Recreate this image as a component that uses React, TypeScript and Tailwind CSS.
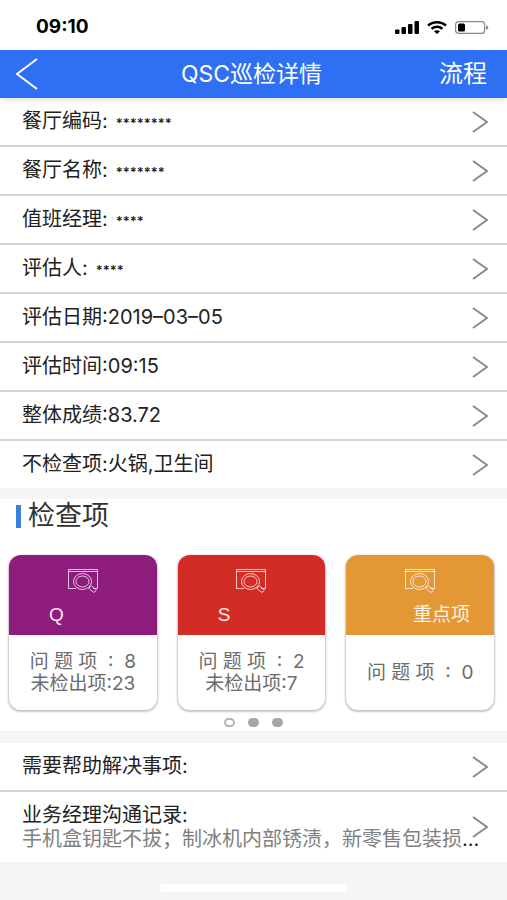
import type { ReactNode } from 'react';

const infoRows = [
  { label: '餐厅编码:', value: '********', masked: true },
  { label: '餐厅名称:', value: '*******', masked: true },
  { label: '值班经理:', value: '****', masked: true },
  { label: '评估人:', value: '****', masked: true },
  { label: '评估日期:', value: '2019–03–05' },
  { label: '评估时间:', value: '09:15' },
  { label: '整体成绩:', value: '83.72' },
  { label: '不检查项:', value: '火锅,卫生间' },
];

const cards = [
  { name: 'Q', color: 'bg-[#8e1c7c]', align: 'pl-10 text-left', problems: 8, missed: 23 },
  { name: 'S', color: 'bg-[#d32c26]', align: 'pl-10 text-left', problems: 2, missed: 7 },
  { name: '重点项', color: 'bg-[#e39735]', align: 'pr-6 text-right', problems: 0 },
];

const ChevronRight = () => (
  <svg className="h-[22px] w-4 shrink-0" viewBox="0 0 16 22" fill="none" stroke="#8a8a8a" strokeWidth="2" aria-hidden="true">
    <path d="M1 1L15 11L1 21" />
  </svg>
);

const InspectIcon = () => (
  <svg className="mx-auto h-6 w-[30px]" viewBox="0 0 30 24" fill="none" stroke="#fff" strokeOpacity="0.75" strokeWidth="1" aria-hidden="true">
    <path d="M8 19.5H0.5V0.5H29.5V19.5H25M0.5 2.5H29.5" />
    <ellipse cx="14.5" cy="12.5" rx="9" ry="8" />
    <ellipse cx="14.5" cy="12.5" rx="6.5" ry="5.5" />
    <path d="M20.5 19L23.5 17L28 20.5C28.5 22.5 26.5 23.5 25 23Z" />
  </svg>
);

const StatusBar = () => (
  <div className="flex h-[50px] items-center justify-between pl-9 pr-[18px] pt-1">
    <span className="text-[19px] font-bold text-black">09:10</span>
    <div className="flex items-center gap-2">
      <svg className="h-[13px] w-6" viewBox="0 0 24 13" aria-hidden="true">
        <rect x="0" y="8.5" width="4.5" height="4.5" rx="1" />
        <rect x="6.5" y="6" width="4.5" height="7" rx="1" />
        <rect x="13" y="3" width="4.5" height="10" rx="1" />
        <rect x="19.5" y="0" width="4.5" height="13" rx="1" />
      </svg>
      <svg className="h-[13px] w-5" viewBox="0 0 20 13" aria-hidden="true">
        <g fill="none" stroke="#000" strokeWidth="2.4">
          <path d="M1 4.6C6 0.1 14 0.1 19 4.6" />
          <path d="M4.5 7.8C7.6 5 12.4 5 15.5 7.8" />
        </g>
        <path d="M7 10.2C8.7 8.8 11.3 8.8 13 10.2L10 13Z" />
      </svg>
      <svg className="h-[13px] w-[34px]" viewBox="0 0 34 13" aria-hidden="true">
        <rect x="0.6" y="0.6" width="29" height="11.8" rx="3" fill="none" stroke="#888" strokeWidth="1.2" />
        <rect x="3" y="2.5" width="7" height="8" rx="1.5" />
        <path d="M31 4.2C34 5 34 8 31 8.8Z" fill="#888" />
      </svg>
    </div>
  </div>
);

const Header = () => (
  <header className="grid h-12 grid-cols-[1fr_auto_1fr] items-center bg-[#2f6ff4] pl-4 pr-5 text-white shadow-md shadow-gray-200">
    <button type="button" aria-label="返回" className="justify-self-start">
      <svg className="h-8 w-[22px]" viewBox="0 0 22 32" fill="none" stroke="currentColor" strokeWidth="2" aria-hidden="true">
        <path d="M21 1L1 16L21 31" />
      </svg>
    </button>
    <h1 className="text-[23px]">QSC巡检详情</h1>
    <button type="button" className="justify-self-end text-2xl">流程</button>
  </header>
);

const Row = ({ children }: { children: ReactNode }) => (
  <a href="#" className="flex items-center justify-between py-[11px] pl-[22px] pr-[19px]">
    {children}
    <ChevronRight />
  </a>
);

const App = () => (
  <div className="min-h-screen bg-[#f5f5f5] font-['Inter','Noto_Sans_CJK_SC',sans-serif] text-[#222]">
    <div className="bg-white">
      <StatusBar />
      <Header />
      <div className="divide-y-2 divide-[#d2d2d2]">
        {infoRows.map((row) => (
          <Row key={row.label}>
            <span className="text-xl leading-[25px]">
              {row.label}
              <span className={row.masked ? 'ml-2 text-[13px] leading-4 font-semibold' : ''}>{row.value}</span>
            </span>
          </Row>
        ))}
      </div>
    </div>

    <section className="mt-[11px] bg-white">
      <div className="flex items-center gap-[7px] px-4 pt-px">
        <span className="h-[23px] w-[5px] bg-[#3a80d8]" />
        <h2 className="text-[27px] leading-8 text-[#333]">检查项</h2>
      </div>
      <div className="mt-[23px] grid grid-cols-3 gap-[21px] pl-[9px] pr-[13px]">
        {cards.map((card) => (
          <div key={card.name} className="flex h-[155px] flex-col overflow-hidden rounded-xl bg-white shadow-[0_1px_2px_1px_#c4c4c4]">
            <div className={`h-20 pt-[14px] text-white/90 ${card.color}`}>
              <InspectIcon />
              <h3 className={`mt-2.5 font-['Liberation_Sans','Noto_Sans_CJK_SC',sans-serif] text-[19px] leading-6 ${card.align}`}>
                {card.name}
              </h3>
            </div>
            <div className="flex flex-1 flex-col justify-center text-center text-[19px] leading-[22px] whitespace-nowrap text-[#6c6c6c]">
              <p>问 题 项 &nbsp;: &nbsp;{card.problems}</p>
              {card.missed !== undefined && <p>未检出项:{card.missed}</p>}
            </div>
          </div>
        ))}
      </div>
      <div className="flex justify-center gap-[13px] pb-1 pt-2">
        <span className="h-[9px] w-[11px] rounded-full border-2 border-[#b4b4b4]" />
        <span className="h-[9px] w-[11px] rounded-full bg-[#a6a6a6]" />
        <span className="h-[9px] w-[11px] rounded-full bg-[#a6a6a6]" />
      </div>
    </section>

    <div className="mt-3 divide-y-2 divide-[#d2d2d2] bg-white">
      <Row>
        <span className="text-xl leading-[25px]">需要帮助解决事项:</span>
      </Row>
      <a href="#" className="relative block py-[11px] pl-[22px] pr-[19px] text-xl leading-6">
        <p>业务经理沟通记录:</p>
        <p className="truncate text-[#808080]">
          手机盒钥匙不拔；制冰机内部锈渍，新零售包装损<span className="text-[#222]">...</span>
        </p>
        <span className="absolute right-[19px] top-6">
          <ChevronRight />
        </span>
      </a>
    </div>

    <div className="mx-auto mt-[22px] h-2 w-[187px] rounded-full bg-white" />
  </div>
);

export default App;
